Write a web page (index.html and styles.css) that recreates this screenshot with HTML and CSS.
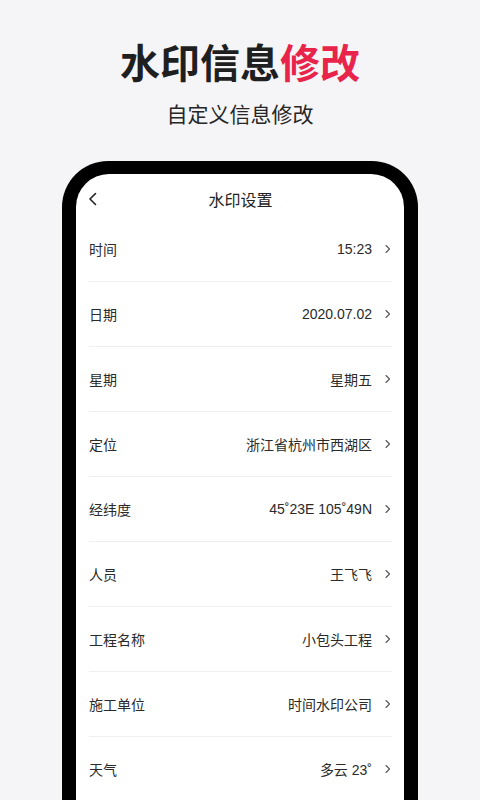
FILE: index.html
```html
<!DOCTYPE html>
<html lang="zh-CN">
<head>
<meta charset="utf-8">
<title>水印信息修改</title>
<link rel="stylesheet" href="styles.css">
</head>
<body>
<div class="page">
  <h1 class="title">水印信息<span class="accent">修改</span></h1>
  <p class="subtitle">自定义信息修改</p>
  <div class="phone">
    <div class="screen">
      <div class="nav">
        <svg class="back" width="10" height="14" viewBox="0 0 10 14"><path d="M7.5 1.5 L2 7 L7.5 12.5" fill="none" stroke="#222" stroke-width="1.6" stroke-linecap="round" stroke-linejoin="round"/></svg>
        <span class="nav-title">水印设置</span>
      </div>
      <ul class="list">
        <li class="row"><span class="label">时间</span><span class="value">15:23</span><svg class="chev" width="8" height="10" viewBox="0 0 8 10"><path d="M2 1.5 L5.5 5 L2 8.5" fill="none" stroke="#555" stroke-width="1.1" stroke-linecap="round" stroke-linejoin="round"/></svg></li>
        <li class="row"><span class="label">日期</span><span class="value">2020.07.02</span><svg class="chev" width="8" height="10" viewBox="0 0 8 10"><path d="M2 1.5 L5.5 5 L2 8.5" fill="none" stroke="#555" stroke-width="1.1" stroke-linecap="round" stroke-linejoin="round"/></svg></li>
        <li class="row"><span class="label">星期</span><span class="value">星期五</span><svg class="chev" width="8" height="10" viewBox="0 0 8 10"><path d="M2 1.5 L5.5 5 L2 8.5" fill="none" stroke="#555" stroke-width="1.1" stroke-linecap="round" stroke-linejoin="round"/></svg></li>
        <li class="row"><span class="label">定位</span><span class="value">浙江省杭州市西湖区</span><svg class="chev" width="8" height="10" viewBox="0 0 8 10"><path d="M2 1.5 L5.5 5 L2 8.5" fill="none" stroke="#555" stroke-width="1.1" stroke-linecap="round" stroke-linejoin="round"/></svg></li>
        <li class="row"><span class="label">经纬度</span><span class="value">45˚23E 105˚49N</span><svg class="chev" width="8" height="10" viewBox="0 0 8 10"><path d="M2 1.5 L5.5 5 L2 8.5" fill="none" stroke="#555" stroke-width="1.1" stroke-linecap="round" stroke-linejoin="round"/></svg></li>
        <li class="row"><span class="label">人员</span><span class="value">王飞飞</span><svg class="chev" width="8" height="10" viewBox="0 0 8 10"><path d="M2 1.5 L5.5 5 L2 8.5" fill="none" stroke="#555" stroke-width="1.1" stroke-linecap="round" stroke-linejoin="round"/></svg></li>
        <li class="row"><span class="label">工程名称</span><span class="value">小包头工程</span><svg class="chev" width="8" height="10" viewBox="0 0 8 10"><path d="M2 1.5 L5.5 5 L2 8.5" fill="none" stroke="#555" stroke-width="1.1" stroke-linecap="round" stroke-linejoin="round"/></svg></li>
        <li class="row"><span class="label">施工单位</span><span class="value">时间水印公司</span><svg class="chev" width="8" height="10" viewBox="0 0 8 10"><path d="M2 1.5 L5.5 5 L2 8.5" fill="none" stroke="#555" stroke-width="1.1" stroke-linecap="round" stroke-linejoin="round"/></svg></li>
        <li class="row"><span class="label">天气</span><span class="value">多云 23˚</span><svg class="chev" width="8" height="10" viewBox="0 0 8 10"><path d="M2 1.5 L5.5 5 L2 8.5" fill="none" stroke="#555" stroke-width="1.1" stroke-linecap="round" stroke-linejoin="round"/></svg></li>
      </ul>
    </div>
  </div>
</div>
</body>
</html>
```
FILE: styles.css
```css
html, body {
  margin: 0;
  padding: 0;
}
body {
  width: 480px;
  height: 800px;
  overflow: hidden;
  background: #f5f5f8;
  font-family: "Liberation Sans", "Noto Sans CJK SC", sans-serif;
  color: #222;
}
.page {
  padding-top: 37px;
  text-align: center;
}
.title {
  margin: 0;
  font-family: "Noto Sans CJK SC", sans-serif;
  font-size: 40px;
  line-height: 48px;
  font-weight: 700;
  color: #1f1f1f;
}
.accent {
  color: #e8244b;
}
.subtitle {
  margin: 14px 0 0;
  font-family: "Noto Sans CJK SC", sans-serif;
  font-size: 21px;
  line-height: 28px;
  font-weight: 400;
  color: #262626;
}
.phone {
  width: 356px;
  margin: 34px auto 0;
  box-sizing: border-box;
  padding: 13px 14px 0;
  height: 639px;
  background: #000;
  border-radius: 46px 46px 0 0;
}
.screen {
  background: #fff;
  height: 100%;
  overflow: hidden;
  border-radius: 33px 33px 0 0;
  padding: 0 12px 0 13px;
  text-align: left;
}
.nav {
  position: relative;
  height: 22px;
  padding: 14px 0 7px;
  display: flex;
  align-items: center;
  justify-content: center;
}
.back {
  position: absolute;
  left: -1px;
  top: 18px;
}
.nav-title {
  font-family: "Noto Sans CJK SC", sans-serif;
  font-size: 16px;
  line-height: 22px;
  color: #222;
}
.list {
  list-style: none;
  margin: 0;
  padding: 0;
}
.row {
  box-sizing: border-box;
  height: 65px;
  display: flex;
  align-items: center;
  border-bottom: 1px solid #efefef;
  font-size: 14px;
  color: #2a2a2a;
}
.label {
  flex: 1;
}
.value {
  margin-right: 12px;
}
.chev {
  display: block;
}
```
